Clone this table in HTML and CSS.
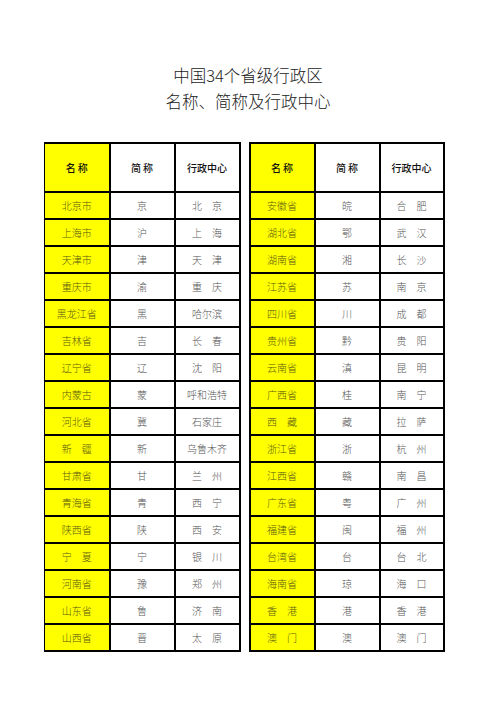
FILE: index.html
```html
<!DOCTYPE html>
<html lang="zh">
<head>
<meta charset="utf-8">
<title>中国34个省级行政区</title>
<link rel="stylesheet" href="styles.css">
</head>
<body>
<div class="page">
  <h1 class="title">中国34个省级行政区<br>名称、简称及行政中心</h1>
  <table class="grid">
    <colgroup>
      <col class="c-name"><col class="c-abbr"><col class="c-cap"><col class="c-gap"><col class="c-name"><col class="c-abbr"><col class="c-cap2">
    </colgroup>
    <thead>
      <tr>
        <th class="name first">名 称</th><th>简 称</th><th>行政中心</th><th class="gap"></th><th class="name">名 称</th><th>简 称</th><th>行政中心</th>
      </tr>
    </thead>
    <tbody>
      <tr><td class="name first">北京市</td><td>京</td><td>北　京</td><td class="gap"></td><td class="name">安徽省</td><td>皖</td><td>合　肥</td></tr>
      <tr><td class="name first">上海市</td><td>沪</td><td>上　海</td><td class="gap"></td><td class="name">湖北省</td><td>鄂</td><td>武　汉</td></tr>
      <tr><td class="name first">天津市</td><td>津</td><td>天　津</td><td class="gap"></td><td class="name">湖南省</td><td>湘</td><td>长　沙</td></tr>
      <tr><td class="name first">重庆市</td><td>渝</td><td>重　庆</td><td class="gap"></td><td class="name">江苏省</td><td>苏</td><td>南　京</td></tr>
      <tr><td class="name first">黑龙江省</td><td>黑</td><td>哈尔滨</td><td class="gap"></td><td class="name">四川省</td><td>川</td><td>成　都</td></tr>
      <tr><td class="name first">吉林省</td><td>吉</td><td>长　春</td><td class="gap"></td><td class="name">贵州省</td><td>黔</td><td>贵　阳</td></tr>
      <tr><td class="name first">辽宁省</td><td>辽</td><td>沈　阳</td><td class="gap"></td><td class="name">云南省</td><td>滇</td><td>昆　明</td></tr>
      <tr><td class="name first">内蒙古</td><td>蒙</td><td>呼和浩特</td><td class="gap"></td><td class="name">广西省</td><td>桂</td><td>南　宁</td></tr>
      <tr><td class="name first">河北省</td><td>冀</td><td>石家庄</td><td class="gap"></td><td class="name">西　藏</td><td>藏</td><td>拉　萨</td></tr>
      <tr><td class="name first">新　疆</td><td>新</td><td>乌鲁木齐</td><td class="gap"></td><td class="name">浙江省</td><td>浙</td><td>杭　州</td></tr>
      <tr><td class="name first">甘肃省</td><td>甘</td><td>兰　州</td><td class="gap"></td><td class="name">江西省</td><td>赣</td><td>南　昌</td></tr>
      <tr><td class="name first">青海省</td><td>青</td><td>西　宁</td><td class="gap"></td><td class="name">广东省</td><td>粤</td><td>广　州</td></tr>
      <tr><td class="name first">陕西省</td><td>陕</td><td>西　安</td><td class="gap"></td><td class="name">福建省</td><td>闽</td><td>福　州</td></tr>
      <tr><td class="name first">宁　夏</td><td>宁</td><td>银　川</td><td class="gap"></td><td class="name">台湾省</td><td>台</td><td>台　北</td></tr>
      <tr><td class="name first">河南省</td><td>豫</td><td>郑　州</td><td class="gap"></td><td class="name">海南省</td><td>琼</td><td>海　口</td></tr>
      <tr><td class="name first">山东省</td><td>鲁</td><td>济　南</td><td class="gap"></td><td class="name">香　港</td><td>港</td><td>香　港</td></tr>
      <tr><td class="name first">山西省</td><td>晋</td><td>太　原</td><td class="gap"></td><td class="name">澳　门</td><td>澳</td><td>澳　门</td></tr>
    </tbody>
  </table>
</div>
</body>
</html>
```

FILE: styles.css
```css
html, body {
  margin: 0;
  padding: 0;
  background: #ffffff;
}

.page {
  width: 496px;
  padding-top: 62px;
  font-family: "Noto Sans CJK SC", "Noto Sans", sans-serif;
}

.title {
  margin: 0 0 28px 0;
  text-align: center;
  font-size: 16.5px;
  line-height: 26px;
  font-weight: 300;
  color: #222;
}

.grid {
  margin-left: 44px;
  border-collapse: collapse;
  table-layout: fixed;
  width: 400px;
}

.c-name { width: 65px; }
.c-abbr { width: 65px; }
.c-cap { width: 65px; }
.c-gap { width: 10px; }
.c-cap2 { width: 64px; }

.grid th,
.grid td {
  border: 2px solid #000;
  padding: 0;
  text-align: center;
  vertical-align: middle;
  font-size: 10px;
  white-space: nowrap;
  overflow: hidden;
}

.grid th {
  height: 47px;
  font-weight: 500;
  color: #111;
}

.grid td {
  height: 25px;
  font-weight: 300;
  color: #555;
}

.grid .name {
  background: #ffff00;
  color: #5a5a10;
}

.grid th.name {
  color: #111;
}

.grid .first {
  border-left-width: 1px;
}

.grid .gap {
  background: #ffffff;
  border-top: none;
  border-bottom: none;
}
```
